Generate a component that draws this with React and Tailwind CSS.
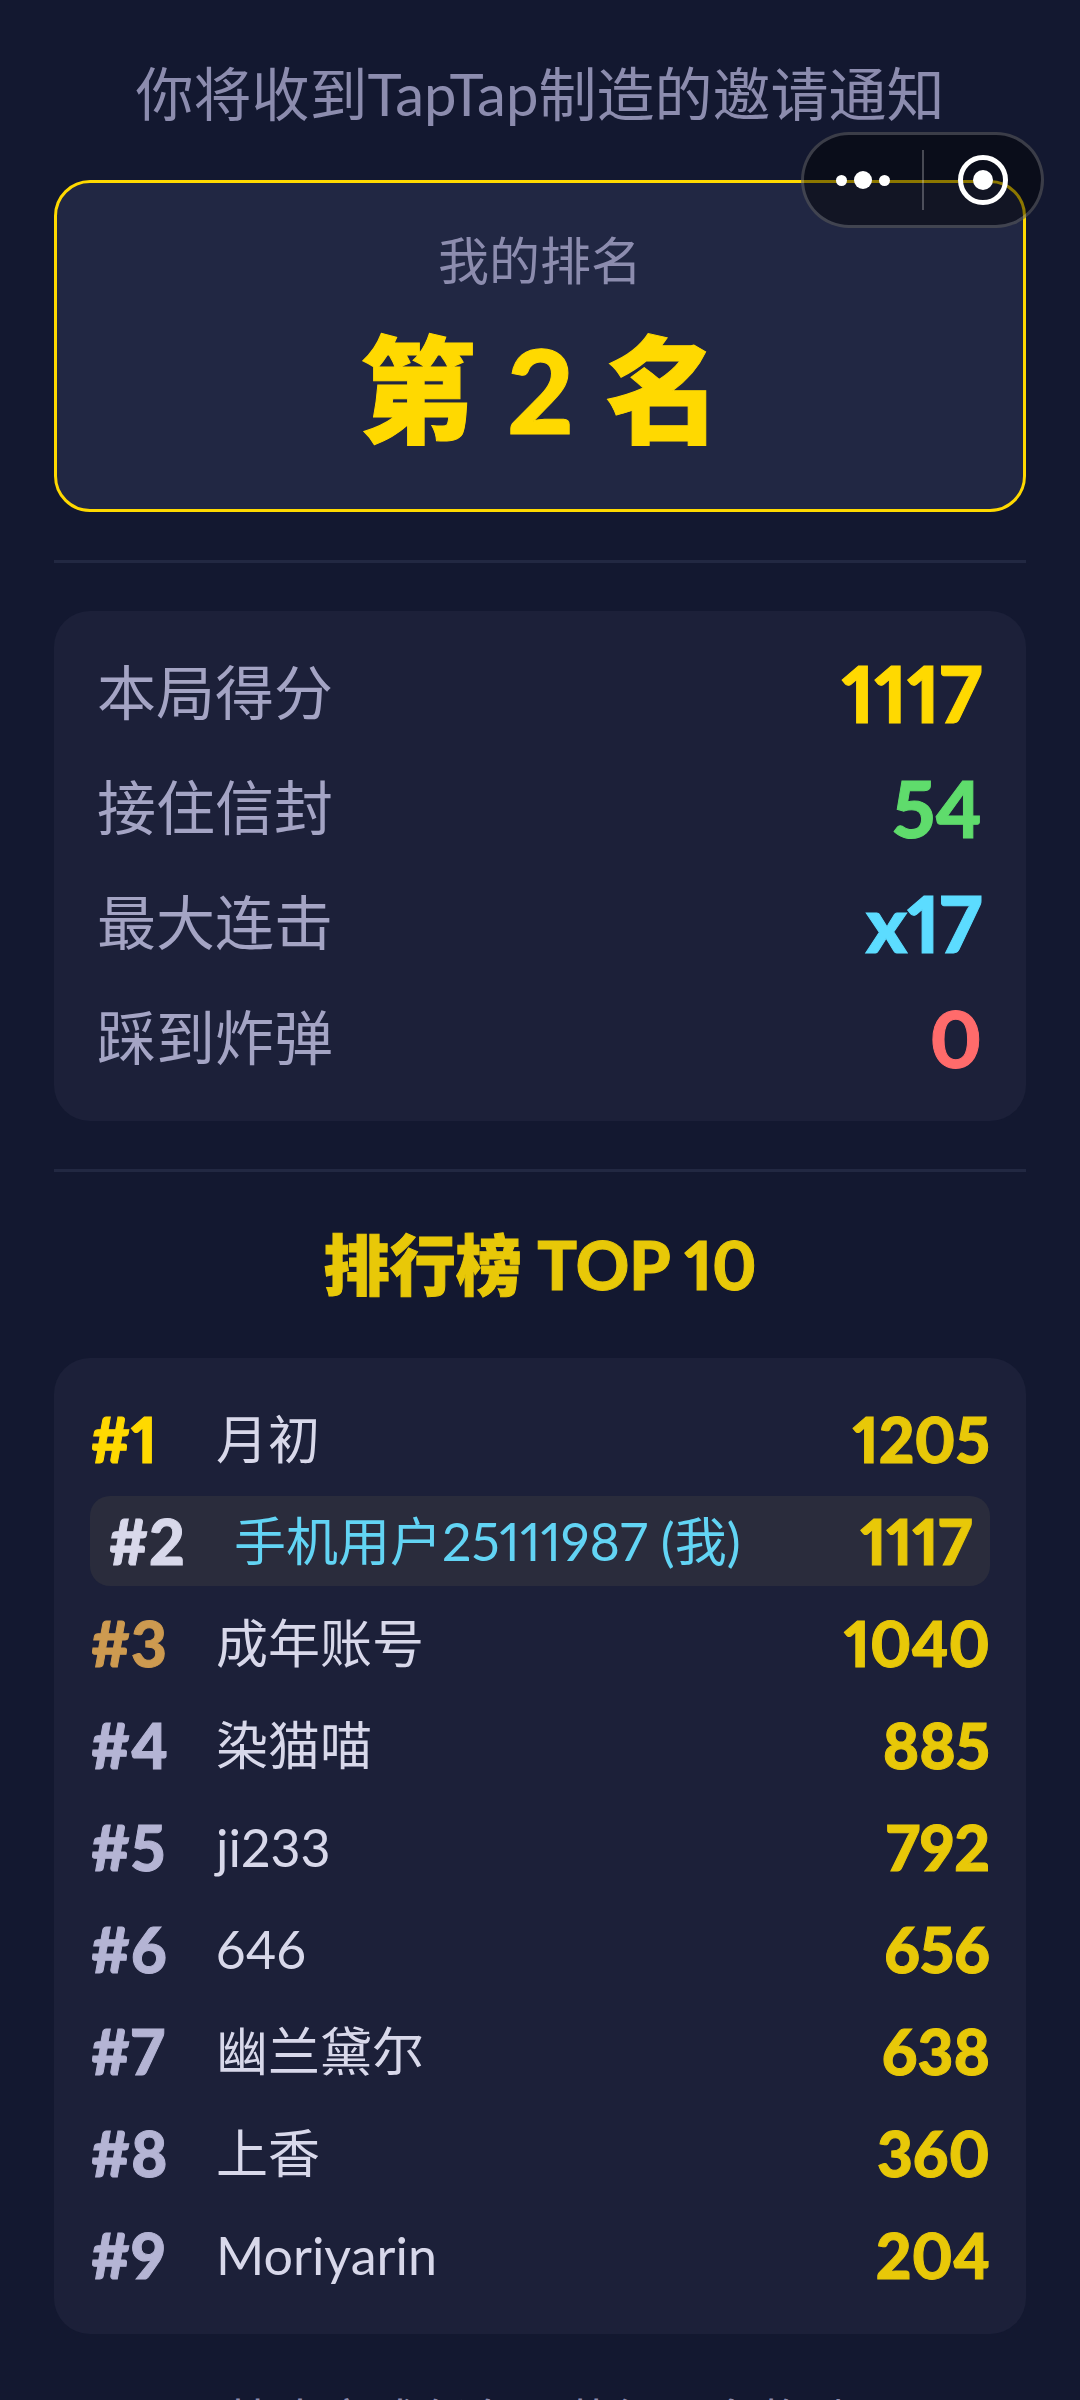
const font = "font-['Lato','Noto_Sans_CJK_SC',sans-serif]";
const heavy = "font-black [-webkit-text-stroke:1px_currentColor]";

const stats = [
  { label: "本局得分", value: "1117", color: "text-[#ffd900]" },
  { label: "接住信封", value: "54", color: "text-[#5fdc6c]" },
  { label: "最大连击", value: "x17", color: "text-[#5cdcff]" },
  { label: "踩到炸弹", value: "0", color: "text-[#ff6b6b]" },
];

const ranks = [
  { n: 3, name: "成年账号", score: 1040, color: "text-[#cd9a50]" },
  { n: 4, name: "染猫喵", score: 885 },
  { n: 5, name: "ji233", score: 792 },
  { n: 6, name: "646", score: 656 },
  { n: 7, name: "幽兰黛尔", score: 638 },
  { n: 8, name: "上香", score: 360 },
  { n: 9, name: "Moriyarin", score: 204 },
];

function Row({ n, name, score, color = "text-[#b4b4d4]" }) {
  return (
    <div className="flex h-[102px] items-center">
      <span className={`w-[126px] text-[62px] ${heavy} ${color}`}>#{n}</span>
      <span className="flex-1 text-[52px] font-normal text-[#d8d8ea]">{name}</span>
      <span className={`text-[62px] ${heavy} text-[#e8c808]`}>{score}</span>
    </div>
  );
}

export default function App() {
  return (
    <div className={`relative h-[2400px] w-[1080px] overflow-hidden bg-[#131830] px-[54px] pt-[54px] proportional-nums ${font}`}>
      {/* capsule */}
      <div className="absolute left-[801px] top-[132px] flex h-[96px] w-[243px] items-center rounded-full border-[3px] border-white/20 bg-black/45">
        <div className="flex w-[118px] items-center justify-center gap-[7px]">
          <span className="size-[11px] rounded-full bg-white" />
          <span className="size-[18px] rounded-full bg-white" />
          <span className="size-[11px] rounded-full bg-white" />
        </div>
        <div className="h-[60px] w-[2px] bg-white/25" />
        <div className="flex flex-1 items-center justify-center">
          <div className="flex size-[50px] items-center justify-center rounded-full border-[5px] border-white">
            <div className="size-[20px] rounded-full bg-white" />
          </div>
        </div>
      </div>

      <p className="text-center text-[58px] leading-[80px] font-normal text-[#8c8cae]">你将收到TapTap制造的邀请通知</p>

      <div className="mt-[46px] flex h-[332px] flex-col items-center rounded-[36px] border-[3px] border-[#ffd900] bg-[#212743]">
        <p className="mt-[42px] text-[51px] leading-[72px] font-normal text-[#8c8cae]">我的排名</p>
        <p className={`mt-[28px] pl-[3px] text-[116px] leading-[130px] tracking-[2px] whitespace-pre text-[#ffd900] ${heavy}`}>第 2 名</p>
      </div>

      <div className="mt-[48px] h-[3px] bg-[#222842]" />

      <div className="mt-[48px] flex h-[510px] flex-col justify-center rounded-[36px] bg-[#1c2039] pr-[44px] pl-[43px]">
        {stats.map((s) => (
          <div key={s.label} className="flex h-[115px] items-center justify-between">
            <span className="text-[59px] font-normal text-[#a4a4c4]">{s.label}</span>
            <span className={`text-[78px] ${heavy} ${s.color}`}>{s.value}</span>
          </div>
        ))}
      </div>

      <div className="mt-[48px] h-[3px] bg-[#222842]" />

      <h2 className={`mt-[58px] text-center text-[66px] leading-[70px] text-[#e8c808] ${heavy}`}>排行榜 TOP 10</h2>

      <div className="mt-[58px] rounded-[36px] bg-[#1c2039] px-[36px] pt-[30px] pb-[28px]">
        <Row n={1} name="月初" score={1205} color="text-[#ffd900]" />
        <div className="my-[6px] flex h-[90px] items-center rounded-[20px] bg-[#2a2c3c] px-[18px]">
          <span className={`w-[126px] text-[62px] ${heavy} text-[#d8d8ea]`}>#2</span>
          <span className="flex-1 text-[52px] font-normal text-[#62d4f4]">手机用户25111987 (我)</span>
          <span className={`text-[62px] ${heavy} text-[#e8c808]`}>1117</span>
        </div>
        {ranks.map((r) => (
          <Row key={r.n} {...r} />
        ))}
      </div>

      <p className="mt-[57px] text-center text-[48px] leading-[60px] font-normal text-[#8c8cae]">快去完成任务，获得更多奖励</p>
    </div>
  );
}
